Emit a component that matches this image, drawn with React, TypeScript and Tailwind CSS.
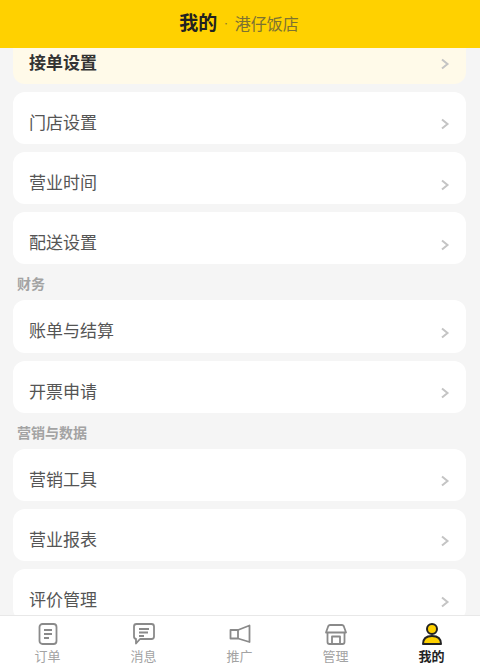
const FONT = "font-['Inter','Noto_Sans_CJK_SC',sans-serif]"

function Row({ label, active }: { label: string; active?: boolean }) {
  return (
    <div
      className={`h-[52.2px] rounded-xl flex items-center justify-between pl-4 pr-4 pt-[10px] ${
        active ? 'bg-[#fffae9] text-[#333333] font-bold' : 'bg-white text-[#555555]'
      }`}
    >
      <span className="text-[17px] leading-6">{label}</span>
      <svg width="10" height="12" viewBox="0 0 10 12" fill="none" className="mt-[3px]">
        <path d="M2 1.5 7.5 6 2 10.5" stroke="#c4c4c4" strokeWidth="2" />
      </svg>
    </div>
  )
}

function SectionTitle({ children }: { children: string }) {
  return <div className="h-5 mt-[10px] mb-[5.95px] px-1 text-sm leading-5 font-bold text-[#a3a3a3]">{children}</div>
}

function OrderIcon() {
  return (
    <svg width="24" height="24" viewBox="0 0 24 24" fill="none" stroke="#8a8a8a" strokeWidth="1.8">
      <rect x="3.500" y="2" width="17" height="20" rx="3" />
      <path d="M8 8h8M8 12h8M8 16h5" />
    </svg>
  )
}

function MessageIcon() {
  return (
    <svg width="24" height="24" viewBox="0 0 24 24" fill="none" stroke="#8a8a8a" strokeWidth="1.8">
      <path d="M4.500 2h15A2.500 2.500 0 0 1 22 4.500v10a2.500 2.500 0 0 1-2.500 2.500H8l-4 4.500V17A2.500 2.500 0 0 1 2 14.500v-10A2.500 2.500 0 0 1 4.500 2Z" strokeLinejoin="round" />
      <path d="M7 7h10M7 10.500h9M7 14h5" />
    </svg>
  )
}

function PromoIcon() {
  return (
    <svg width="24" height="24" viewBox="0 0 24 24" fill="none" stroke="#8a8a8a" strokeWidth="1.800" strokeLinejoin="round">
      <path d="M21.500 3.500v16.500L10 16.500H2.500V8H10Z" />
      <path d="M10 8v8.500" />
    </svg>
  )
}

function StoreIcon() {
  return (
    <svg width="24" height="24" viewBox="0 0 24 24" fill="none" stroke="#8a8a8a" strokeWidth="1.800" strokeLinejoin="round">
      <path d="M6 3h12a2 2 0 0 1 1.700 1L22 10.500H2L4.300 4A2 2 0 0 1 6 3Z" />
      <path d="M3.500 10.500V20a2 2 0 0 0 2 2h13a2 2 0 0 0 2-2v-9.500" />
      <path d="M8 22v-7.500h8V22" />
    </svg>
  )
}

function MineIcon() {
  return (
    <svg width="24" height="24" viewBox="0 0 24 24" fill="none" stroke="#222222" strokeWidth="2">
      <circle cx="12" cy="7" r="5" fill="#ffd100" />
      <path d="M3 22c0-5 3-8 9-8s9 3 9 8Z" fill="#ffd100" strokeLinejoin="round" />
    </svg>
  )
}

const tabs = [
  { label: '订单', icon: <OrderIcon /> },
  { label: '消息', icon: <MessageIcon /> },
  { label: '推广', icon: <PromoIcon /> },
  { label: '管理', icon: <StoreIcon /> },
  { label: '我的', icon: <MineIcon />, active: true },
]

export default function App() {
  return (
    <div className={`h-[670px] w-[480px] flex flex-col overflow-hidden bg-[#f5f5f5] ${FONT}`}>
      <header className="h-12 shrink-0 bg-[#ffd100] flex items-center justify-center gap-[7px] pr-[2px] relative z-10">
        <span className="text-[19px] font-bold text-[#222222]">我的</span>
        <span className="text-[#8a7a30] text-xs">·</span>
        <span className="text-base text-[#7d7232]">港仔饭店</span>
      </header>

      <main className="flex-1 overflow-hidden pl-[13px] pr-[14px]">
        <div className="-mt-[16.3px] flex flex-col gap-2">
          <Row label="接单设置" active />
          <Row label="门店设置" />
          <Row label="营业时间" />
          <Row label="配送设置" />
        </div>
        <SectionTitle>财务</SectionTitle>
        <div className="flex flex-col gap-2">
          <Row label="账单与结算" />
          <Row label="开票申请" />
        </div>
        <SectionTitle>营销与数据</SectionTitle>
        <div className="flex flex-col gap-2">
          <Row label="营销工具" />
          <Row label="营业报表" />
          <Row label="评价管理" />
        </div>
      </main>

      <nav className="h-[55px] shrink-0 bg-white border-t border-[#e8e8e8] flex">
        {tabs.map((tab) => (
          <div key={tab.label} className="flex-1 flex flex-col items-center pt-[6px] pr-[1px]">
            {tab.icon}
            <span className={`mt-[2px] text-[13px] leading-4 ${tab.active ? 'font-bold text-[#222222]' : 'text-[#a3a3a3]'}`}>
              {tab.label}
            </span>
          </div>
        ))}
      </nav>
    </div>
  )
}
